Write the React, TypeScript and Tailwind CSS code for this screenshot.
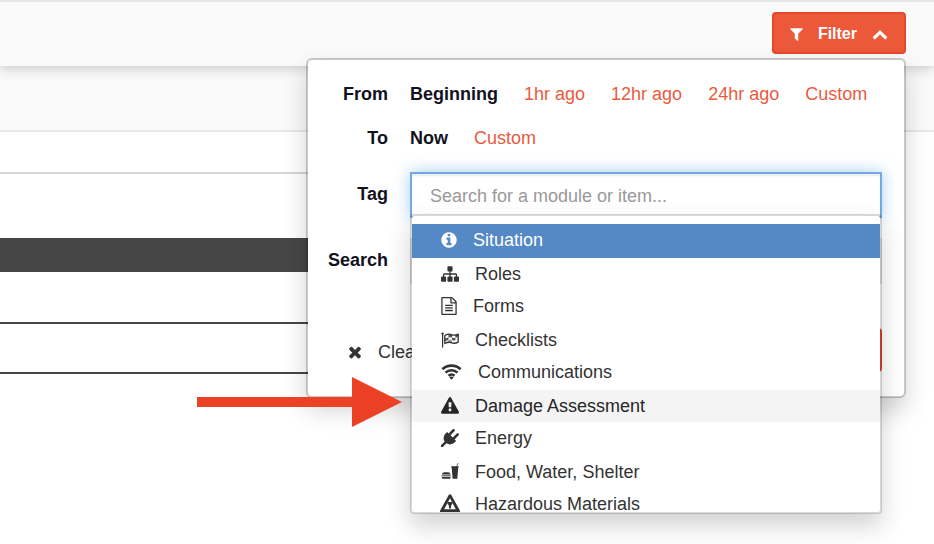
import type { ReactNode } from "react";

type IconProps = { className: string; box?: string; children: ReactNode };

function Icon({ className, box = "0 0 1792 1792", children }: IconProps) {
  return (
    <svg viewBox={box} className={`shrink-0 ${className}`} fill="currentColor" aria-hidden="true">
      {children}
    </svg>
  );
}

const FilterIcon = () => (
  <Icon className="h-4 w-[13px]" box="192 0 1408 1792">
    <path d="M1595 295q17 41-14 70l-493 493v742q0 42-39 59-13 5-25 5-27 0-45-19l-256-256q-19-19-19-45v-486l-493-493q-31-29-14-70 17-39 59-39h1280q42 0 59 39z" />
  </Icon>
);

const ChevronUpIcon = () => (
  <Icon className="h-4 w-4">
    <path d="M1683 1331l-166 165q-19 19-45 19t-45-19l-531-531-531 531q-19 19-45 19t-45-19l-166-165q-19-19-19-45.5t19-45.5l742-741q19-19 45-19t45 19l742 741q19 19 19 45.5t-19 45.5z" />
  </Icon>
);

const TimesIcon = () => (
  <Icon className="h-[18px] w-[14px]" box="192 0 1408 1792">
    <path d="M1490 1322q0 40-28 68l-136 136q-28 28-68 28t-68-28l-294-294-294 294q-28 28-68 28t-68-28l-136-136q-28-28-28-68t28-68l294-294-294-294q-28-28-28-68t28-68l136-136q28-28 68-28t68 28l294 294 294-294q28-28 68-28t68 28l136 136q28 28 28 68t-28 68l-294 294 294 294q28 28 28 68z" />
  </Icon>
);

const InfoIcon = () => (
  <Icon className="h-[18px] w-4" box="128 0 1536 1792">
    <path d="M1152 1376v-160q0-14-9-23t-23-9h-96v-512q0-14-9-23t-23-9h-320q-14 0-23 9t-9 23v160q0 14 9 23t23 9h96v320h-96q-14 0-23 9t-9 23v160q0 14 9 23t23 9h448q14 0 23-9t9-23zm-128-896v-160q0-14-9-23t-23-9h-192q-14 0-23 9t-9 23v160q0 14 9 23t23 9h192q14 0 23-9t9-23zm640 416q0 209-103 385.5t-279.5 279.5-385.5 103-385.5-103-279.5-279.5-103-385.5 103-385.5 279.5-279.5 385.5-103 385.5 103 279.5 279.5 103 385.5z" />
  </Icon>
);

const SitemapIcon = () => (
  <Icon className="h-[18px] w-[18px]">
    <path d="M1792 1248v320q0 40-28 68t-68 28h-320q-40 0-68-28t-28-68v-320q0-40 28-68t68-28h96v-192h-512v192h96q40 0 68 28t28 68v320q0 40-28 68t-68 28h-320q-40 0-68-28t-28-68v-320q0-40 28-68t68-28h96v-192h-512v192h96q40 0 68 28t28 68v320q0 40-28 68t-68 28h-320q-40 0-68-28t-28-68v-320q0-40 28-68t68-28h96v-192q0-52 38-90t90-38h512v-192h-96q-40 0-68-28t-28-68v-320q0-40 28-68t68-28h320q40 0 68 28t28 68v320q0 40-28 68t-68 28h-96v192h512q52 0 90 38t38 90v192h96q40 0 68 28t28 68z" />
  </Icon>
);

const FormIcon = () => (
  <Icon className="h-[18px] w-4" box="128 0 1536 1792">
    <path d="M1596 380q28 28 48 76t20 88v1152q0 40-28 68t-68 28h-1344q-40 0-68-28t-28-68v-1600q0-40 28-68t68-28h896q40 0 88 20t76 48zm-444-244v376h376q-10-29-22-41l-313-313q-12-12-41-22zm384 1528v-1024h-416q-40 0-68-28t-28-68v-416h-768v1536h1280zm-1024-864q0-14 9-23t23-9h704q14 0 23 9t9 23v64q0 14-9 23t-23 9h-704q-14 0-23-9t-9-23v-64zm736 224q14 0 23 9t9 23v64q0 14-9 23t-23 9h-704q-14 0-23-9t-9-23v-64q0-14 9-23t23-9h704zm0 256q14 0 23 9t9 23v64q0 14-9 23t-23 9h-704q-14 0-23-9t-9-23v-64q0-14 9-23t23-9h704z" />
  </Icon>
);

const FlagIcon = () => (
  <Icon className="h-[18px] w-[18px]" box="0 0 18 18">
    <circle cx="1.600" cy="2.600" r="1.200" />
    <path d="M1 3h1.200v13.500H1z" />
    <path
      d="M3.800 4.500C6 3.300 8 2.600 10.300 3.600c2.400 1 4.400.9 6.900-.5v8c-2.500 1.400-4.800 1.500-7.100.6-2.200-.9-4.200-.4-6.300.8z"
      fill="none"
      stroke="currentColor"
      strokeWidth="1.300"
      strokeLinejoin="round"
    />
    <path d="M7.400 3.300l3.600.4v2.900c-1.200-.4-2.300-.5-3.600-.2zM3.900 7.600c1.200-.6 2.200-1 3.500-1.200v2.500c-1.300.200-2.300.6-3.500 1.200zM11 6.600c1.300.4 2.200.4 3.400.1v2.600c-1.200.3-2.100.2-3.400-.2zM14.400 4.200l2.800-1.100v2.600l-2.800 1z" opacity=".85" />
    <path d="M7.400 8.900c1.300-.3 2.400-.2 3.600.2v2.600l-3.600-.4z" opacity=".5" />
  </Icon>
);

const WifiIcon = () => (
  <Icon className="h-[18px] w-[21px]" box="0 0 21 18">
    <g fill="none" stroke="currentColor" strokeWidth="2.600">
      <path d="M1.400 6.300a13.200 13.200 0 0 1 18.200 0" />
      <path d="M4.500 9.600a8.700 8.700 0 0 1 12 0" />
      <path d="M7.500 12.700a4.400 4.400 0 0 1 6 0" />
    </g>
    <path d="M8.300 14.600a3.200 3.200 0 0 1 4.400 0l-2.200 2.200z" />
  </Icon>
);

const WarningIcon = () => (
  <Icon className="h-[18px] w-[18px]">
    <path d="M1024 1375v-190q0-14-9.500-23.500t-22.500-9.500h-192q-13 0-22.500 9.500t-9.500 23.500v190q0 14 9.500 23.500t22.500 9.500h192q13 0 22.500-9.500t9.500-23.500zm-2-374l18-459q0-12-10-19-13-11-24-11h-220q-11 0-24 11-10 7-10 21l17 457q0 10 10 16.500t24 6.500h185q14 0 23.500-6.500t10.500-16.500zm-14-934l768 1408q35 63-2 126-17 29-46.500 46t-63.500 17h-1536q-34 0-63.500-17t-46.500-46q-37-63-2-126l768-1408q17-31 47-49t65-18 65 18 47 49z" />
  </Icon>
);

const PlugIcon = () => (
  <Icon className="h-[18px] w-[18px]">
    <path d="M1755 453q37 38 37 90.500t-37 90.500l-401 400 150 150-160 160q-163 163-389.500 186.500t-411.500-100.500l-362 362h-181v-181l362-362q-124-185-100.500-411.500t186.500-389.500l160-160 150 150 400-401q38-37 91-37t90 37 37 90.500-37 90.500l-400 401 234 234 401-400q38-37 91-37t90 37z" />
  </Icon>
);

const FoodIcon = () => (
  <Icon className="h-[18px] w-[18px]" box="0 0 18 18">
    <path d="M1 11.600c0-1.500 1.200-2.300 2.600-2.300h3.200c1.400 0 2.600.8 2.600 2.300z" />
    <path d="M.6 12.300h9.200v1H.6z" />
    <path d="M.9 14h8.600v.8c0 .6-.4 1-1 1H1.900c-.6 0-1-.4-1-1z" />
    <path d="M10.200 3.200h5.300l.6-2.400 1.200-.5.2.6-.8.300-.5 2h1.500v1.300h-.5l-.9 11.300h-4.700L10.700 4.500h-.5z" />
  </Icon>
);

const HazardIcon = () => (
  <Icon className="-mx-px h-5 w-5" box="0 0 20 20">
    <path
      fillRule="evenodd"
      d="M10 .2c.6 0 1 .3 1.300.8l8.500 15.400c.6 1.100 0 2.600-1.300 2.600h-17c-1.300 0-1.900-1.500-1.300-2.600L8.700 1c.3-.5.7-.8 1.300-.8zm0 4.100L4.200 15.300h11.600z"
    />
    <path d="M7.800 8h4.400l.4 1.700-1.400 1.600-.3 3.200H9.100l-.3-3.200-1.400-1.600z" />
  </Icon>
);

const modules = [
  { name: "Situation", icon: <InfoIcon />, look: "bg-[#5489c5] text-white" },
  { name: "Roles", icon: <SitemapIcon />, look: "" },
  { name: "Forms", icon: <FormIcon />, look: "" },
  { name: "Checklists", icon: <FlagIcon />, look: "" },
  { name: "Communications", icon: <WifiIcon />, look: "" },
  { name: "Damage Assessment", icon: <WarningIcon />, look: "bg-[#f4f4f4] text-[#262626]" },
  { name: "Energy", icon: <PlugIcon />, look: "" },
  { name: "Food, Water, Shelter", icon: <FoodIcon />, look: "" },
  { name: "Hazardous Materials", icon: <HazardIcon />, look: "" },
];

function Choices({ current, others }: { current: string; others: string[] }) {
  return (
    <div className="flex h-11 items-center gap-[26px] whitespace-nowrap">
      <button type="button" className="font-bold text-[#12121f]">
        {current}
      </button>
      {others.map((label) => (
        <button key={label} type="button" className="text-[#e95b3e]">
          {label}
        </button>
      ))}
    </div>
  );
}

function TagMenu() {
  return (
    <ul
      role="listbox"
      aria-label="Modules"
      className="absolute inset-x-0 top-[42px] z-10 max-h-[300px] overflow-hidden rounded border-2 border-black/15 bg-white bg-clip-padding pt-2 shadow-[0_12px_24px_rgba(0,0,0,0.175)]"
    >
      {modules.map((item, index) => (
        <li
          key={item.name}
          role="option"
          aria-selected={index === 0}
          className={`flex items-center gap-4 pl-[29px] whitespace-nowrap odd:h-[34px] odd:pb-[2px] even:h-8 ${item.look}`}
        >
          {item.icon}
          {item.name}
        </li>
      ))}
    </ul>
  );
}

function FilterPanel() {
  return (
    <form className="absolute top-[56px] right-7 z-10 w-[600px] rounded-md border-2 border-black/20 bg-white bg-clip-padding pt-3 pr-[22px] pb-6 pl-5 text-lg leading-6 text-[#333] shadow-[0_12px_24px_rgba(0,0,0,0.175)]">
      <div className="grid grid-cols-[60px_1fr] items-center gap-x-[22px]">
        <span className="text-right font-bold text-[#12121f]">From</span>
        <Choices current="Beginning" others={["1hr ago", "12hr ago", "24hr ago", "Custom"]} />
        <span className="text-right font-bold text-[#12121f]">To</span>
        <Choices current="Now" others={["Custom"]} />
      </div>
      <div className="mt-3 grid grid-cols-[60px_1fr] items-center gap-x-[22px] gap-y-5">
        <label htmlFor="tag" className="pb-[2px] text-right font-bold text-[#12121f]">
          Tag
        </label>
        <div className="relative">
          <input
            id="tag"
            type="text"
            placeholder="Search for a module or item..."
            className="block h-[46px] w-full border-2 border-[#73a8e4] bg-white px-[18px] pt-[2px] shadow-[inset_0_2px_2px_rgba(0,0,0,0.075),0_0_16px_rgba(102,175,233,0.6)] outline-none placeholder:text-[#999]"
          />
          <TagMenu />
        </div>
        <label htmlFor="search" className="pb-[2px] text-right font-bold text-[#12121f]">
          Search
        </label>
        <input id="search" type="text" className="block h-[46px] w-full border-2 border-[#e4e4e4] bg-white px-[18px] outline-none" />
      </div>
      <div className="mt-11 flex justify-between">
        <button type="button" className="flex h-11 items-center gap-4 px-5 pt-1">
          <TimesIcon />
          Clear
        </button>
        <button type="submit" className="h-11 rounded border-2 border-[#e8472a] bg-[#eb583a] px-5 font-bold text-white">
          Apply
        </button>
      </div>
    </form>
  );
}

export default function App() {
  return (
    <div className="relative min-h-screen overflow-hidden bg-white font-['Liberation_Sans',Arial,sans-serif]">
      <header className="relative z-10 flex justify-end border-t-2 border-[#e6e6e6] bg-[#fafafa] pt-[10px] pr-7 pb-3 shadow-[0_2px_12px_rgba(0,0,0,0.22)]">
        <button
          type="button"
          aria-expanded="true"
          className="flex h-[42px] items-center gap-[15px] rounded border-2 border-[#e8472a] bg-[#eb583a] px-4 pt-[2px] text-base font-bold text-white"
        >
          <FilterIcon />
          Filter
          <ChevronUpIcon />
        </button>
        <FilterPanel />
      </header>

      <div className="h-[66px] border-b-2 border-[#e7e7e7] bg-[#fafafa]" />
      <main className="pt-10 pr-[60px]">
        <div className="h-[66px] border-t-2 border-[#d6d6d6]" />
        <div className="h-[34px] bg-[#464646]" />
        <div className="h-[52px] border-b-2 border-[#464646]" />
        <div className="h-[50px] border-b-2 border-[#464646]" />
      </main>

      <svg viewBox="0 0 205 50" className="absolute top-[377px] left-[197px] z-20 h-[50px] w-[205px]" fill="#eb4127" aria-hidden="true">
        <path d="M0 20h155V0l50 25-50 25V30H0z" />
      </svg>
    </div>
  );
}
